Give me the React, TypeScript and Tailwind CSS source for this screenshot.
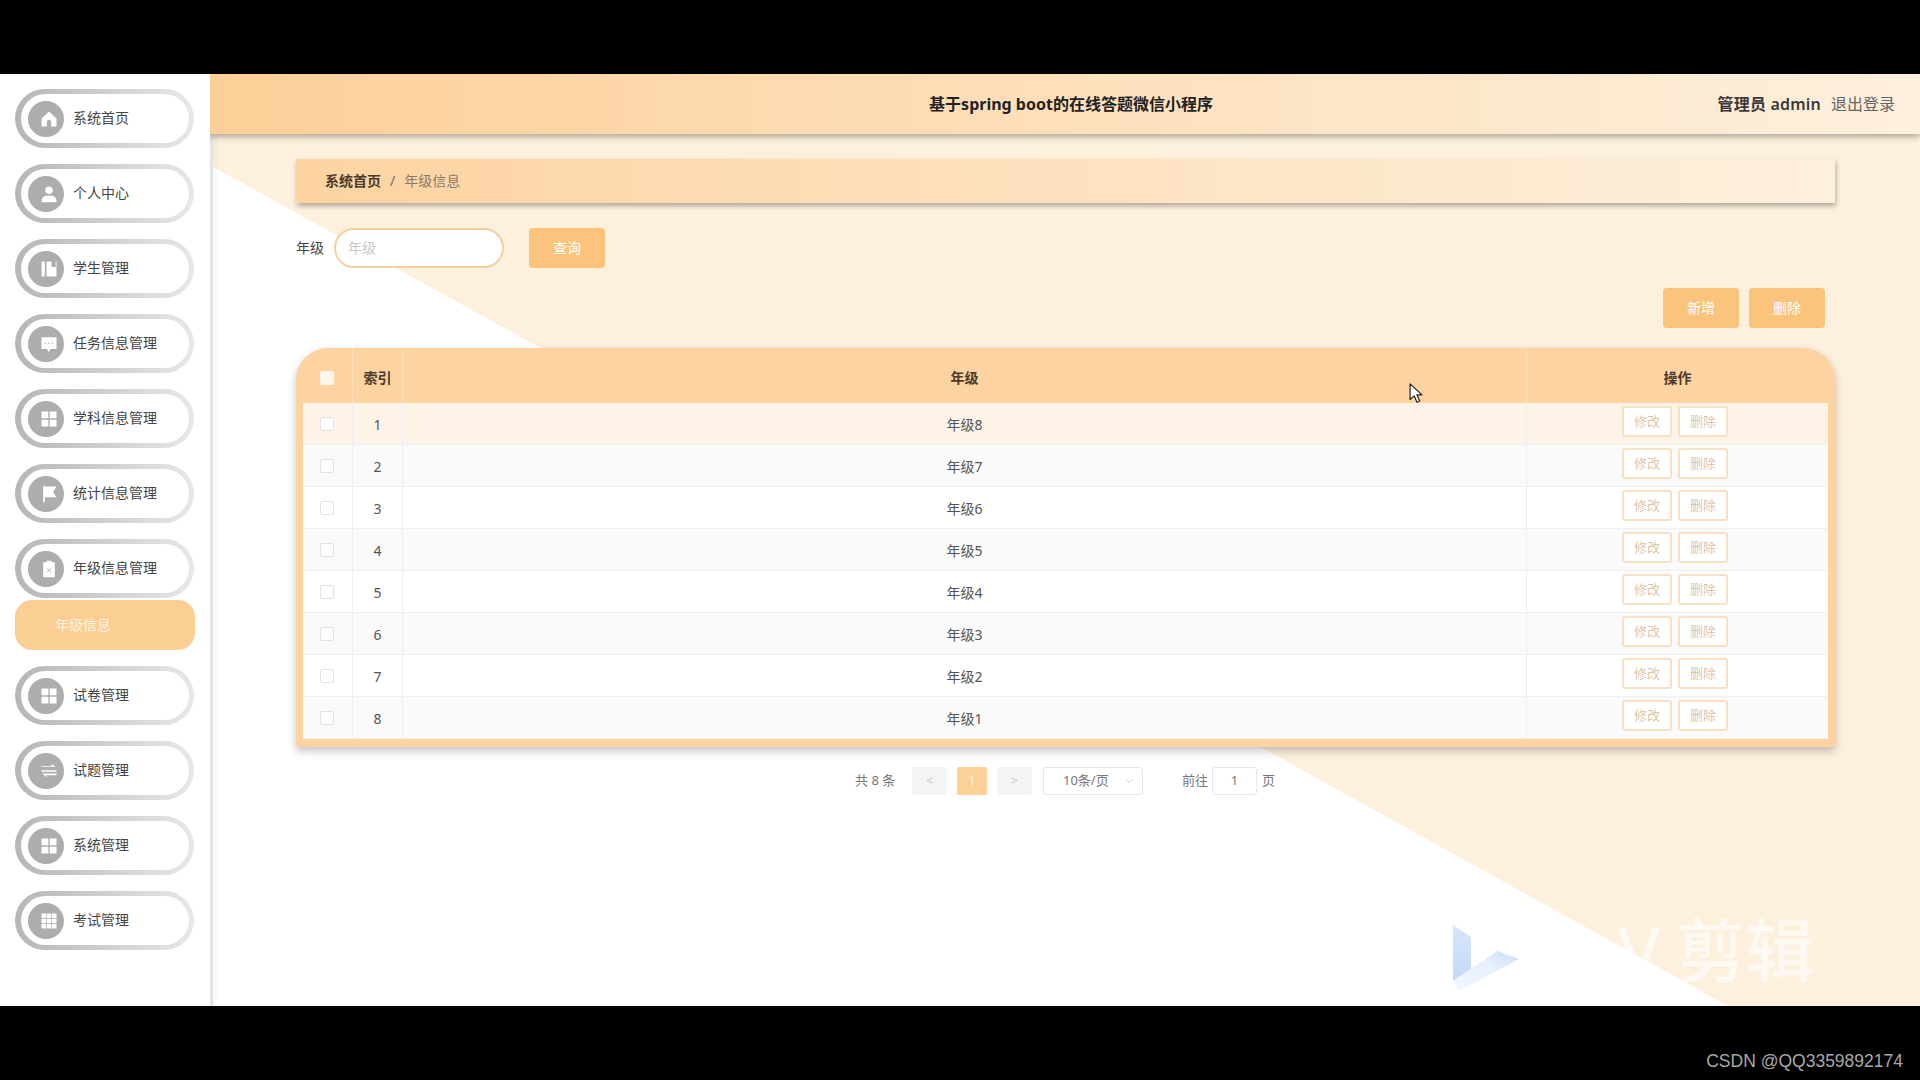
import React from 'react';

const Home = () => (
  <svg viewBox="0 0 24 24" className="w-[20px] h-[20px] fill-white">
    <path d="M12 3 3 11.500V21h6.500v-5.500a2.500 2.500 0 0 1 5 0V21H21v-9.500z" />
  </svg>
);
const User = () => (
  <svg viewBox="0 0 24 24" className="w-[20px] h-[20px] fill-white">
    <circle cx="12" cy="7.500" r="4.500" />
    <path d="M3 21c0-4.500 3-7 5.500-7h7c2.500 0 5.500 2.500 5.500 7 0 .6-.4 1-1 1H4c-.6 0-1-.4-1-1z" />
  </svg>
);
const Book = () => (
  <svg viewBox="0 0 24 24" className="w-[20px] h-[20px] fill-white">
    <path d="M3 3h4v18H3zM9 3h6v6.500h5V3h1v18H9z" />
  </svg>
);
const Chat = () => (
  <svg viewBox="0 0 24 24" className="w-[20px] h-[20px]">
    <path className="fill-white" d="M3 4h18v14h-7l-3 4-1-4H3z" />
    <circle cx="8" cy="11" r="1" fill="#c9c9c9" />
    <circle cx="12" cy="11" r="1" fill="#c9c9c9" />
    <circle cx="16" cy="11" r="1" fill="#c9c9c9" />
  </svg>
);
const Grid4 = () => (
  <svg viewBox="0 0 24 24" className="w-[20px] h-[20px] fill-white">
    <path d="M3 3h8.200v8.200H3zM12.800 3H21v8.200h-8.200zM3 12.800h8.200V21H3zM12.800 12.800H21V21h-8.200z" />
  </svg>
);
const Flag = () => (
  <svg viewBox="0 0 24 24" className="w-[20px] h-[20px] fill-white">
    <path d="M5 2h2v1h14l-4 6.500L21 16H7v6H5z" />
  </svg>
);
const Clip = () => (
  <svg viewBox="0 0 24 24" className="w-[20px] h-[20px]">
    <path className="fill-white" d="M9 2h6v2h4v18H5V4h4z" />
    <path d="m9.500 11 5 5m0-5-5 5" stroke="#aaa" strokeWidth="1" />
  </svg>
);
const Sliders = () => (
  <svg viewBox="0 0 24 24" className="w-[20px] h-[20px] fill-white">
    <path d="M3 6h12V3.500L20 7H3zM3 11h18v2H3zM21 15H4l5 4.500V17h12z" />
  </svg>
);
const Table = () => (
  <svg viewBox="0 0 24 24" className="w-[20px] h-[20px] fill-white">
    <path d="M3 3h5.500v5.500H3zM9.300 3h5.400v5.500H9.300zM15.500 3H21v5.500h-5.500zM3 9.300h5.500v5.400H3zM9.300 9.300h5.400v5.400H9.300zM15.500 9.300H21v5.400h-5.500zM3 15.500h5.500V21H3zM9.300 15.500h5.400V21H9.300zM15.500 15.500H21V21h-5.500z" />
  </svg>
);

const NavItem = ({ icon, label, tight }: { icon: React.ReactNode; label: string; tight?: boolean }) => (
  <div className={`w-[179px] h-[59px] rounded-full bg-gradient-to-r from-[#b6b6b6] to-[#e8e8e8] py-[5px] pl-[6px] pr-[5px] ${tight ? 'mb-[2px]' : 'mb-[16px]'}`}>
    <div className="h-full rounded-full bg-white flex items-center pl-[7px]">
      <span className="w-[36px] h-[36px] rounded-full bg-[#adadad] flex items-center justify-center pl-[6px] shrink-0">{icon}</span>
      <span className="ml-[9px] pb-[3px] text-[14px] text-[#444]">{label}</span>
    </div>
  </div>
);

const rows = [8, 7, 6, 5, 4, 3, 2, 1];

export default function App() {
  return (
    <div className="w-[1920px] h-[1080px] bg-black flex flex-col overflow-hidden font-['Noto_Sans','Noto_Sans_CJK_SC',sans-serif]">
      <div className="h-[74px] shrink-0" />

      <div className="h-[932px] flex shrink-0">
        <aside className="w-[210px] shrink-0 bg-white relative z-[1] pt-[15px] pl-[15px] shadow-[3px_0_0_#e3e3e3,6px_0_5px_rgba(0,0,0,0.04)]">
          <NavItem icon={<Home />} label="系统首页" />
          <NavItem icon={<User />} label="个人中心" />
          <NavItem icon={<Book />} label="学生管理" />
          <NavItem icon={<Chat />} label="任务信息管理" />
          <NavItem icon={<Grid4 />} label="学科信息管理" />
          <NavItem icon={<Flag />} label="统计信息管理" />
          <NavItem icon={<Clip />} label="年级信息管理" tight />
          <div className="w-[180px] h-[50px] rounded-[17px] bg-[#fbce93] flex items-center pl-[40px] pb-[2px] mb-[16px] text-[14px] text-[#fdf3e3]">年级信息</div>
          <NavItem icon={<Grid4 />} label="试卷管理" />
          <NavItem icon={<Sliders />} label="试题管理" />
          <NavItem icon={<Grid4 />} label="系统管理" />
          <NavItem icon={<Table />} label="考试管理" />
        </aside>

        <main className="flex-1 relative bg-[#fdf0dd] overflow-hidden flex flex-col">
          <div className="absolute inset-0 bg-white [clip-path:polygon(0_91px,1518px_100%,0_100%)]" />

          <header className="relative z-[2] h-[60px] shrink-0 flex items-center bg-gradient-to-r from-[#fdcf98] to-[#fdf0dd] shadow-[0_3px_6px_rgba(0,0,0,0.3)]">
            <div className="w-full text-center text-[16px] font-bold text-[#222] pl-[12px]">基于spring boot的在线答题微信小程序</div>
            <div className="absolute right-[25px] top-0 h-full flex items-center text-[16px]">
              <span className="font-semibold text-[#3a3a3a] tracking-[0.2px]">管理员 admin</span>
              <span className="ml-[10px] text-[#666]">退出登录</span>
            </div>
          </header>

          <div className="relative flex-1 pt-[25px] pl-[86px] pr-[85px]">
            <div className="h-[44px] flex items-center pl-[29px] pb-[2px] rounded-[2px] bg-gradient-to-r from-[#fdd3a1] to-[#fdf0dd] shadow-[1px_3px_5px_rgba(0,0,0,0.3)] text-[14px]">
              <span className="font-bold text-[#4a3a2a]">系统首页</span>
              <span className="mx-[9px] text-[#7a6a5a]">/</span>
              <span className="text-[#8a7a6a]">年级信息</span>
            </div>

            <div className="mt-[25px] h-[40px] flex items-center">
              <span className="text-[14px] text-[#444] w-[38px] pb-[2px]">年级</span>
              <div className="w-[170px] h-[40px] rounded-full border-2 border-[#f3d29f] bg-white flex items-center pl-[12px] pb-[2px] text-[14px] text-[#c8c8c8]">年级</div>
              <button className="ml-[25px] w-[76px] h-[40px] rounded-[4px] bg-[#fbc47c] text-white text-[14px] pb-[2px]">查询</button>
            </div>

            <div className="mt-[20px] h-[40px] flex justify-end gap-[10px] pr-[10px]">
              <button className="w-[76px] h-[40px] rounded-[4px] bg-[#fbc47c] text-white text-[14px] pb-[2px]">新增</button>
              <button className="w-[76px] h-[40px] rounded-[4px] bg-[#fbc47c] text-white text-[14px] pb-[2px]">删除</button>
            </div>

            <div className="mt-[20px] rounded-t-[32px] rounded-b-[4px] bg-[#fdd3a1] px-[7px] pb-[8px] shadow-[0_4px_8px_rgba(40,40,60,0.28)]">
              <div className="h-[55px] grid grid-cols-[50px_50px_1fr_301px] items-stretch text-[14px] font-bold text-[#4a3a2a]">
                <div className="flex items-center justify-center pt-[4px] pr-[1px] border-r border-[#fddfba]">
                  <span className="w-[14px] h-[14px] bg-[#fdf6ec] rounded-[2px]" />
                </div>
                <div className="flex items-center justify-center pt-[4px] border-r border-[#fddfba]">索引</div>
                <div className="flex items-center justify-center pt-[4px] border-r border-[#fddfba]">年级</div>
                <div className="flex items-center justify-center pt-[4px]">操作</div>
              </div>
              {rows.map((n, i) => (
                <div
                  key={n}
                  className={`h-[42px] grid grid-cols-[50px_50px_1fr_301px] items-stretch border-b border-[#efeff2] text-[14px] text-[#555] ${i === 0 ? 'bg-[#fdf3e7]' : i % 2 === 1 ? 'bg-[#fafafa]' : 'bg-white'}`}
                >
                  <div className="flex items-center justify-center pr-[1px] border-r border-[#efeff2]">
                    <span className="w-[14px] h-[14px] border border-[#e2e2e2] rounded-[2px] bg-white" />
                  </div>
                  <div className="flex items-center justify-center pt-[1px] border-r border-[#efeff2]">{i + 1}</div>
                  <div className="flex items-center justify-center pt-[1px] border-r border-[#efeff2]">年级{n}</div>
                  <div className="flex items-start justify-center gap-[6px] pt-[3px] pr-[5px]">
                    <button className="w-[50px] h-[31px] rounded-[3px] border-2 border-[#f8e0c3] bg-white text-[13px] text-[#e2c6a4]">修改</button>
                    <button className="w-[50px] h-[31px] rounded-[3px] border-2 border-[#f8e0c3] bg-white text-[13px] text-[#e2c6a4]">删除</button>
                  </div>
                </div>
              ))}
            </div>

            <div className="mt-[20px] h-[28px] flex items-center pl-[559px] text-[13px] text-[#777]">
              <span className="w-[57px]">共 8 条</span>
              <span className="w-[35px] h-[28px] bg-[#f4f4f5] rounded-[2px] flex items-center justify-center text-[#c0c4cc]">&lt;</span>
              <span className="ml-[10px] w-[30px] h-[28px] bg-[#fdd097] rounded-[2px] flex items-center justify-center text-[#fdf3e3]">1</span>
              <span className="ml-[10px] w-[35px] h-[28px] bg-[#f4f4f5] rounded-[2px] flex items-center justify-center text-[#c0c4cc]">&gt;</span>
              <span className="ml-[11px] w-[100px] h-[28px] border border-[#e4e7ed] rounded-[3px] flex items-center pl-[19px] pr-[8px] justify-between bg-white">
                10条/页
                <svg viewBox="0 0 12 12" className="w-[10px] h-[10px] fill-none stroke-[#c0c4cc]"><path d="m2 4 4 4 4-4" /></svg>
              </span>
              <span className="ml-[39px] w-[30px]">前往</span>
              <span className="w-[45px] h-[28px] border border-[#e4e7ed] rounded-[3px] flex items-center justify-center bg-white">1</span>
              <span className="ml-[5px]">页</span>
            </div>
          </div>

          {/* video editor watermark */}
          <svg viewBox="0 0 68 78" className="absolute z-[3] left-[1243px] top-[839px] w-[68px] h-[78px]">
            <defs>
              <linearGradient id="wmBar" x1="0" y1="0" x2="0" y2="1">
                <stop offset="0" stopColor="#d6e5fb" />
                <stop offset="1" stopColor="#c4daf8" />
              </linearGradient>
              <linearGradient id="wmTail" x1="0" y1="1" x2="1" y2="0">
                <stop offset="0" stopColor="#f3f7fe" />
                <stop offset="0.6" stopColor="#e8f0fd" />
                <stop offset="1" stopColor="#c9dcf9" />
              </linearGradient>
            </defs>
            <path d="M0 12 18 24V60L0 68z" fill="url(#wmBar)" />
            <path d="M6 78 0 68 44 38 66 46z" fill="url(#wmTail)" />
          </svg>
          <div className="absolute z-[3] left-[1408px] top-[831px] text-[69px] leading-[90px] text-white/65 font-medium whitespace-nowrap flex">
            <span className="mr-[16px]">V</span>
            <span>剪辑</span>
          </div>

          {/* mouse pointer */}
          <svg viewBox="0 0 16 24" className="absolute z-[4] left-[1199px] top-[309px] w-[15px] h-[22px]">
            <path d="M1 1v17l4.500-4 3 7 3-1.300-3-6.700H14z" fill="#fff" stroke="#222" strokeWidth="1.300" strokeLinejoin="round" />
          </svg>
        </main>
      </div>

      <div className="h-[74px] shrink-0 flex items-center justify-end pr-[17px] pt-[36px] font-['Liberation_Sans',sans-serif] text-[17.500px] text-[#a8a8a8]">CSDN @QQ3359892174</div>
    </div>
  );
}
